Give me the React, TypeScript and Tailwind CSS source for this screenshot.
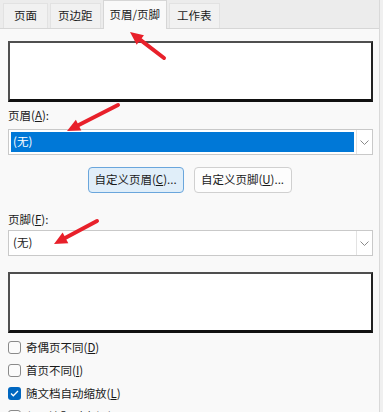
import React from "react";

const font = { fontFamily: '"Noto Sans CJK SC", "Noto Sans", sans-serif' };

function Tab({ label, active, px }: { label: string; active?: boolean; px: string }) {
  return active ? (
    <div className={`h-[29px] ${px} flex items-center bg-[#f9f9f9] border border-b-0 border-[#d6d6d6] text-[11.5px] text-[#1a1a1a] -mb-px z-10`}>
      {label}
    </div>
  ) : (
    <div className={`h-[25px] ${px} flex items-center bg-[#f1f1f1] border border-b-0 border-[#e2e2e2] text-[11.5px] text-[#1a1a1a]`}>
      {label}
    </div>
  );
}

function Chevron() {
  return (
    <svg width="9" height="5" viewBox="0 0 9 5" fill="none">
      <path d="M0.5 0.5l4 4 4-4" stroke="#8a8a8a" strokeWidth="1" />
    </svg>
  );
}

function Select({ selected }: { selected?: boolean }) {
  return (
    <div className="h-[26px] flex bg-white border border-[#c9c9c9]">
      <div className="flex-1 p-[2px]">
        <div className={`h-full flex items-center px-[2px] text-[11.5px] ${selected ? "bg-[#0078d7] text-white" : "text-[#1a1a1a]"}`}>
          (无)
        </div>
      </div>
      <div className="w-[16px] flex items-center justify-center border-l border-[#e3e3e3]">
        <Chevron />
      </div>
    </div>
  );
}

function Preview() {
  return <div className="h-[61px] bg-white border-t-[2px] border-l-[2px] border-[#4f4f4f] border-r-[2px] border-b-[3px] border-r-[#222] border-b-[#111]" />;
}

function Check({ label, hot, checked }: { label: string; hot: string; checked?: boolean }) {
  return (
    <div className="h-[23px] flex items-center gap-[5px] text-[11.5px] text-[#1a1a1a]">
      {checked ? (
        <div className="w-[13px] h-[13px] rounded-[3px] bg-[#0067c0] flex items-center justify-center">
          <svg width="9" height="7" viewBox="0 0 9 7" fill="none">
            <path d="M1 3.5l2.3 2.3L8 1" stroke="white" strokeWidth="1.3" />
          </svg>
        </div>
      ) : (
        <div className="w-[13px] h-[13px] rounded-[3px] border border-[#8a8a8a] bg-[#fbfbfb]" />
      )}
      <span>
        {label}(<span className="underline">{hot}</span>)
      </span>
    </div>
  );
}

function Arrow({ x1, y1, x2, y2 }: { x1: number; y1: number; x2: number; y2: number }) {
  const a = Math.atan2(y2 - y1, x2 - x1);
  const L = 13, W = 6;
  const bx = x2 - L * Math.cos(a), by = y2 - L * Math.sin(a);
  const px = -Math.sin(a) * W, py = Math.cos(a) * W;
  return (
    <g>
      <line x1={x1} y1={y1} x2={bx + 2 * Math.cos(a)} y2={by + 2 * Math.sin(a)} stroke="#e8202a" strokeWidth="4" strokeLinecap="round" />
      <polygon points={`${x2},${y2} ${bx + px},${by + py} ${bx - px},${by - py}`} fill="#e8202a" />
    </g>
  );
}

export default function App() {
  return (
    <div className="relative w-[383px] h-[412px] overflow-hidden bg-[#f0f0f0]" style={font}>
      <div className="w-[380px] h-full border-r border-[#d9d9d9] bg-[#f9f9f9] flex flex-col">
        {/* Tabs */}
        <div className="h-[31px] flex items-end pl-[3px] gap-[2px] bg-[#ececec] border-b border-[#d6d6d6]">
          <Tab label="页面" px="px-[10px]" />
          <Tab label="页边距" px="px-[7px]" />
          <Tab label="页眉/页脚" px="px-[6px]" active />
          <Tab label="工作表" px="px-[7px]" />
        </div>

        <div className="flex flex-col pl-[8px] pr-[6px] pt-[12px]">
          <Preview />
          <div className="mt-[5px] h-[18px] flex items-center text-[11.5px] text-[#1a1a1a]">
            页眉(<span className="underline">A</span>):
          </div>
          <div className="mt-[4px]">
            <Select selected />
          </div>

          <div className="mt-[12px] flex justify-center gap-[10px] pl-[2px] pr-[4px]">
            <div className="h-[26px] w-[96px] flex items-center justify-center rounded-[4px] bg-[#e0eef9] border border-[#6aa6dc] text-[11.5px] text-[#1a1a1a]">
              自定义页眉(<span className="underline">C</span>)...
            </div>
            <div className="h-[26px] w-[98px] flex items-center justify-center rounded-[4px] bg-[#fdfdfd] border border-[#d0d0d0] text-[11.5px] text-[#1a1a1a]">
              自定义页脚(<span className="underline">U</span>)...
            </div>
          </div>

          <div className="mt-[18px] h-[18px] flex items-center text-[11.5px] text-[#1a1a1a]">
            页脚(<span className="underline">F</span>):
          </div>
          <div className="mt-[1px]">
            <Select />
          </div>
          <div className="mt-[16px]">
            <Preview />
          </div>

          <div className="mt-[3px] flex flex-col">
            <Check label="奇偶页不同" hot="D" />
            <Check label="首页不同" hot="I" />
            <Check label="随文档自动缩放" hot="L" checked />
            <Check label="与页边距对齐" hot="M" />
          </div>
        </div>
      </div>

      <svg className="absolute inset-0 pointer-events-none" width="383" height="412">
        <Arrow x1={164} y1={58} x2={130} y2={32} />
        <Arrow x1={118} y1={105} x2={67} y2={131} />
        <Arrow x1={97} y1={221} x2={54} y2={244} />
      </svg>
    </div>
  );
}
